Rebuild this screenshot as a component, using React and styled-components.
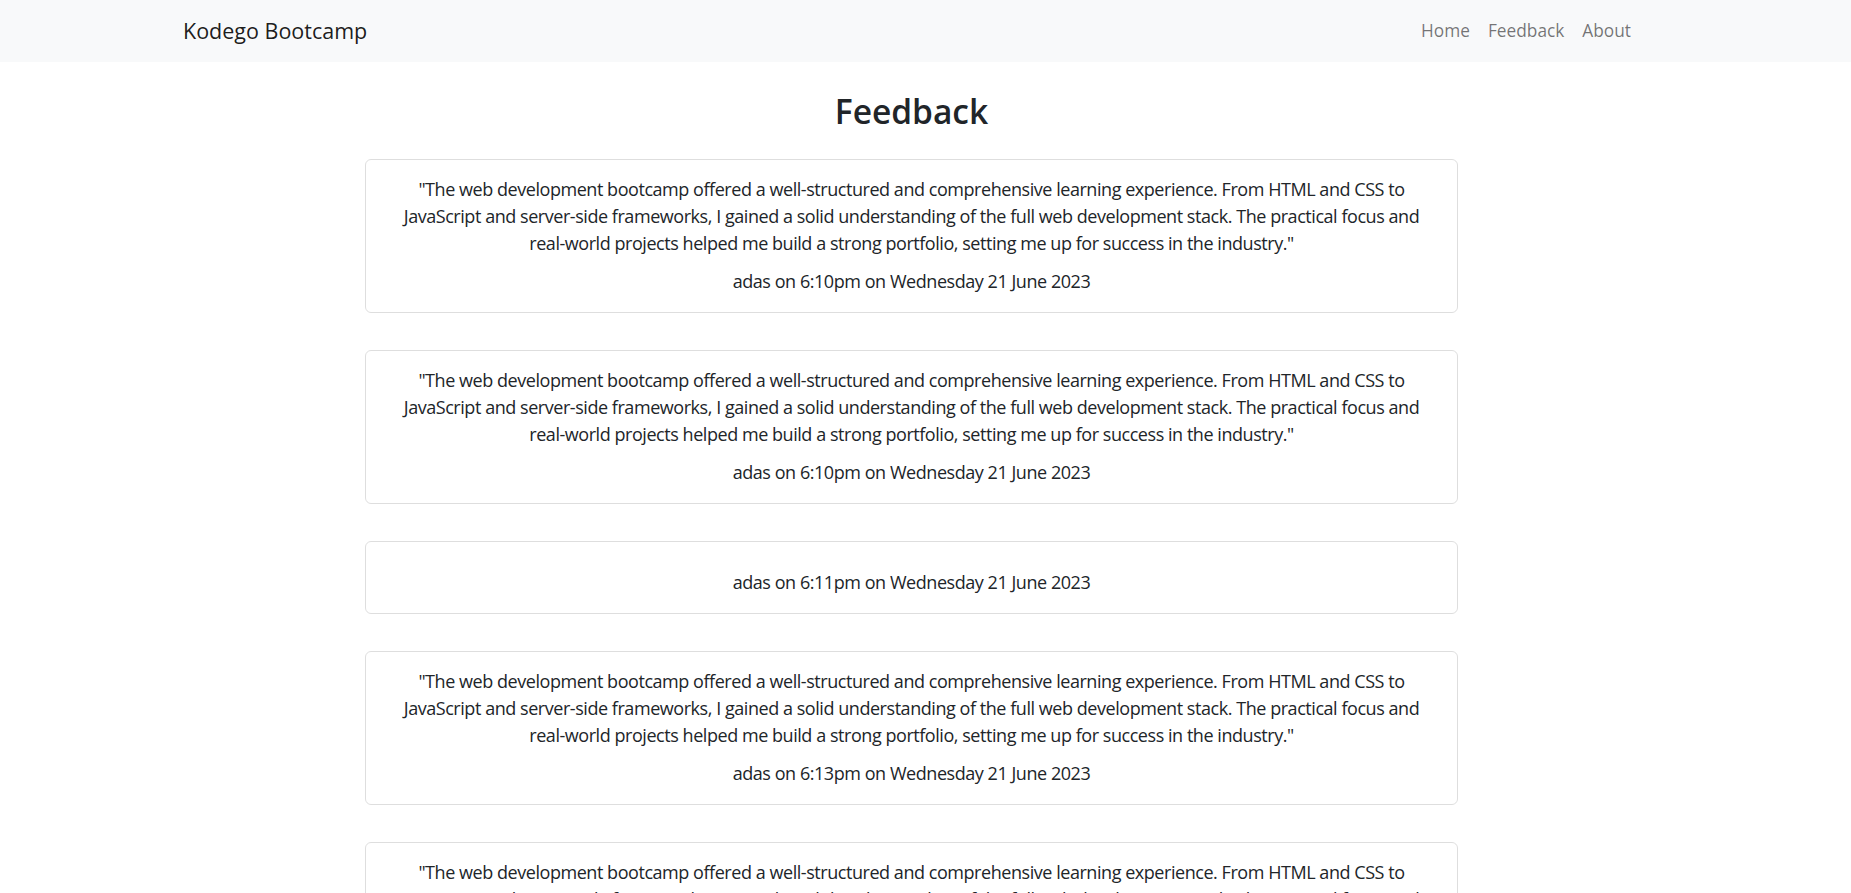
import React from "react"
import styled, { createGlobalStyle } from "styled-components"

const GlobalStyle = createGlobalStyle`
  body {
    margin: 0;
    background: #fff;
    color: #212529;
    font-family: "Segoe UI", "Open Sans", "Noto Sans", sans-serif;
  }
`

const quote = [
  "\"The web development bootcamp offered a well-structured and comprehensive learning experience. From HTML and CSS to",
  "JavaScript and server-side frameworks, I gained a solid understanding of the full web development stack. The practical focus and",
  "real-world projects helped me build a strong portfolio, setting me up for success in the industry.\"",
]

const feedbacks = [
  { text: quote, author: "adas", time: "6:10pm", date: "Wednesday 21 June 2023" },
  { text: quote, author: "adas", time: "6:10pm", date: "Wednesday 21 June 2023" },
  { text: [], author: "adas", time: "6:11pm", date: "Wednesday 21 June 2023" },
  { text: quote, author: "adas", time: "6:13pm", date: "Wednesday 21 June 2023" },
  { text: quote, author: "adas", time: "6:15pm", date: "Wednesday 21 June 2023" },
]

export default function App() {
  return (
    <>
      <GlobalStyle />
      <NavBar>
        <Brand href="#">Kodego Bootcamp</Brand>
        <NavLinks>
          <NavLink href="#">Home</NavLink>
          <NavLink href="#">Feedback</NavLink>
          <NavLink href="#">About</NavLink>
        </NavLinks>
      </NavBar>
      <Main>
        <Title>Feedback</Title>
        <CardList>
          {feedbacks.map((f, index) => (
            <Card key={index}>
              <Quote>
                {f.text.map((line, i) => (
                  <Line key={i}>{line}</Line>
                ))}
              </Quote>
              <Author>
                {f.author} on {f.time} on {f.date}
              </Author>
            </Card>
          ))}
        </CardList>
      </Main>
    </>
  )
}

const NavBar = styled.nav`
  height: 62px;
  background-color: #f8f9fa;
  display: flex;
  align-items: center;
  justify-content: space-between;
  padding: 0 220px 0 183px;
  box-sizing: border-box;
`

const Brand = styled.a`
  font-size: 21.5px;
  color: rgba(0, 0, 0, 0.9);
  text-decoration: none;
  line-height: 1.5;
`

const NavLinks = styled.div`
  display: flex;
  gap: 18px;
`

const NavLink = styled.a`
  font-size: 17.3px;
  color: rgba(0, 0, 0, 0.55);
  text-decoration: none;
  line-height: 1.5;
`

const Main = styled.main`
  width: 1093px;
  margin-left: 365px;
  padding-bottom: 40px;
`

const Title = styled.h1`
  margin: 28px 0 27px;
  font-size: 33.5px;
  font-weight: 600;
  line-height: 42px;
  text-align: center;
  color: #212529;
`

const CardList = styled.div`
  display: flex;
  flex-direction: column;
  gap: 37px;
`

const Card = styled.div`
  border: 1px solid rgba(0, 0, 0, 0.13);
  border-radius: 6px;
  padding: 16px 16px 17px;
  text-align: center;
  font-size: 18px;
  line-height: 27px;
  letter-spacing: -0.45px;
`

const Quote = styled.p`
  margin: 0 0 11px;
`

const Line = styled.span`
  display: block;
  white-space: nowrap;
`

const Author = styled.p`
  margin: 0;
`
